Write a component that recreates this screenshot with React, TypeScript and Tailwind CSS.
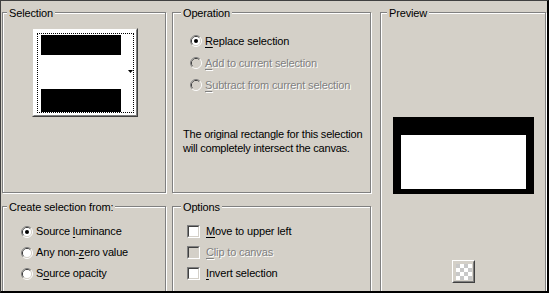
import React from "react";

const FONT = "font-['Liberation_Sans',Arial,sans-serif]";

function Radio({ checked = false, disabled = false }: { checked?: boolean; disabled?: boolean }) {
  return (
    <svg width="12" height="12" viewBox="0 0 12 12" className="shrink-0 block">
      <path d="M2.11 9.89 A5.5 5.5 0 0 1 9.89 2.11" fill="none" stroke="#808080" strokeWidth="1" />
      <path d="M9.89 2.11 A5.5 5.5 0 0 1 2.11 9.89" fill="none" stroke="#ffffff" strokeWidth="1" />
      <path d="M2.82 9.18 A4.5 4.5 0 0 1 9.18 2.82" fill="none" stroke="#404040" strokeWidth="1" />
      <path d="M9.18 2.82 A4.5 4.5 0 0 1 2.82 9.18" fill="none" stroke="#d4d0c8" strokeWidth="1" />
      <circle cx="6" cy="6" r="4" fill={disabled ? "#d4d0c8" : "#ffffff"} />
      {checked && <circle cx="6" cy="6" r="2" fill="#000000" />}
    </svg>
  );
}

function Check({ disabled = false }: { disabled?: boolean }) {
  return (
    <div className="w-[13px] h-[13px] shrink-0 flex border border-t-[#808080] border-l-[#808080] border-b-white border-r-white">
      <div
        className={`flex-1 border border-t-[#404040] border-l-[#404040] border-b-[#d4d0c8] border-r-[#d4d0c8] ${
          disabled ? "bg-[#d4d0c8]" : "bg-white"
        }`}
      />
    </div>
  );
}

function Label({ pre, u, post, disabled = false }: { pre?: string; u: string; post: string; disabled?: boolean }) {
  return (
    <span
      className={`whitespace-nowrap leading-[13px] ${
        disabled ? "text-[#808080] [text-shadow:1px_1px_0_#ffffff]" : "text-black"
      }`}
    >
      {pre}
      <span className="underline decoration-1 underline-offset-[2px]">{u}</span>
      {post}
    </span>
  );
}

function GroupBox({
  title,
  titleClass,
  className,
  children,
}: {
  title: string;
  titleClass: string;
  className: string;
  children?: React.ReactNode;
}) {
  return (
    <div
      className={`relative border border-[#808080] shadow-[inset_1px_1px_0_#ffffff,1px_1px_0_#ffffff] ${className}`}
    >
      <span className={`absolute top-[-6px] px-[2px] bg-[#d4d0c8] leading-[13px] whitespace-nowrap ${titleClass}`}>
        {title}
      </span>
      {children}
    </div>
  );
}

export default function App() {
  return (
    <div
      className={`${FONT} text-[11px] tracking-[-0.15px] text-black w-[549px] h-[293px] overflow-hidden bg-[#d4d0c8] border-t border-l border-t-[#404040] border-l-[#404040] border-r-2 border-b-2 border-r-black border-b-black`}
    >
      <div className="flex pl-[1px] pt-[11px]">
        {/* Column 1 */}
        <div className="w-[164px] shrink-0 flex flex-col gap-[13px]">
          <GroupBox title="Selection" titleClass="left-[4px]" className="h-[181px] pl-[29px] pt-[15px]">
            <div className="w-[106px] h-[89px] flex border border-t-[#d4d0c8] border-l-[#d4d0c8] border-b-[#404040] border-r-[#404040]">
              <div className="relative flex-1 bg-white border border-t-white border-l-white border-b-[#808080] border-r-[#808080]">
                <div className="absolute left-[3px] top-[3px] right-[2px] bottom-[2px] border border-dotted border-black" />
                <div className="flex flex-col pl-[7px] pt-[5px]">
                  <div className="w-[80px] h-[20px] bg-black" />
                  <div className="h-[34px]" />
                  <div className="w-[80px] h-[23px] bg-black" />
                </div>
                <svg width="5" height="3" viewBox="0 0 5 3" className="absolute left-[94px] top-[40px]">
                  <path d="M0 0 H5 L2.5 3 Z" fill="#000000" />
                </svg>
              </div>
            </div>
          </GroupBox>
          <GroupBox title="Create selection from:" titleClass="left-[4px]" className="h-[100px] pl-[18px] pt-[14px]">
            <div className="flex flex-col">
              <div className="h-[21px] flex items-center gap-[3px]">
                <Radio checked />
                <Label pre="Source " u="l" post="uminance" />
              </div>
              <div className="h-[21px] flex items-center gap-[3px]">
                <Radio />
                <Label pre="Any non-" u="z" post="ero value" />
              </div>
              <div className="h-[21px] flex items-center gap-[3px]">
                <Radio />
                <Label pre="S" u="o" post="urce opacity" />
              </div>
            </div>
          </GroupBox>
        </div>

        {/* Column 2 */}
        <div className="w-[199px] shrink-0 ml-[6px] flex flex-col gap-[13px]">
          <GroupBox title="Operation" titleClass="left-[8px]" className="h-[181px] pt-[17px]">
            <div className="flex flex-col pl-[17px]">
              <div className="h-[22px] flex items-center gap-[3px]">
                <Radio checked />
                <Label u="R" post="eplace selection" />
              </div>
              <div className="h-[22px] flex items-center gap-[3px]">
                <Radio disabled />
                <Label u="A" post="dd to current selection" disabled />
              </div>
              <div className="h-[22px] flex items-center gap-[3px]">
                <Radio disabled />
                <Label u="S" post="ubtract from current selection" disabled />
              </div>
            </div>
            <p className="mt-[31px] pl-[10px] leading-[14px] tracking-[-0.22px] whitespace-nowrap">
              The original rectangle for this selection
              <br />
              will completely intersect the canvas.
            </p>
          </GroupBox>
          <GroupBox title="Options" titleClass="left-[8px]" className="h-[100px] pl-[14px] pt-[14px]">
            <div className="flex flex-col">
              <div className="h-[21px] flex items-center gap-[6px]">
                <Check />
                <Label u="M" post="ove to upper left" />
              </div>
              <div className="h-[21px] flex items-center gap-[6px]">
                <Check disabled />
                <Label u="C" post="lip to canvas" disabled />
              </div>
              <div className="h-[21px] flex items-center gap-[6px]">
                <Check />
                <Label u="I" post="nvert selection" />
              </div>
            </div>
          </GroupBox>
        </div>

        {/* Column 3 */}
        <div className="w-[166px] shrink-0 ml-[9px]">
          <GroupBox title="Preview" titleClass="left-[6px]" className="h-[300px] flex flex-col items-start">
            <div className="mt-[104px] ml-[12px] w-[141px] h-[77px] bg-white border-solid border-black border-t-[18px] border-l-[8px] border-r-[8px] border-b-[5px]" />
            <div className="mt-[66px] ml-[71px] w-[23px] h-[23px] flex border border-t-white border-l-white border-b-[#404040] border-r-[#404040]">
              <div className="flex-1 flex items-center justify-center border border-t-[#d4d0c8] border-l-[#d4d0c8] border-b-[#808080] border-r-[#808080]">
                <svg width="16" height="16" viewBox="0 0 16 16" className="block">
                  <rect x="0" y="0" width="16" height="16" fill="#ffffff" />
                  <rect x="0" y="0" width="4" height="4" fill="#c8c8c8" />
                  <rect x="8" y="0" width="4" height="4" fill="#c8c8c8" />
                  <rect x="4" y="4" width="4" height="4" fill="#c8c8c8" />
                  <rect x="12" y="4" width="4" height="4" fill="#c8c8c8" />
                  <rect x="0" y="8" width="4" height="4" fill="#c8c8c8" />
                  <rect x="8" y="8" width="4" height="4" fill="#c8c8c8" />
                  <rect x="4" y="12" width="4" height="4" fill="#c8c8c8" />
                  <rect x="12" y="12" width="4" height="4" fill="#c8c8c8" />
                </svg>
              </div>
            </div>
          </GroupBox>
        </div>
      </div>
    </div>
  );
}
